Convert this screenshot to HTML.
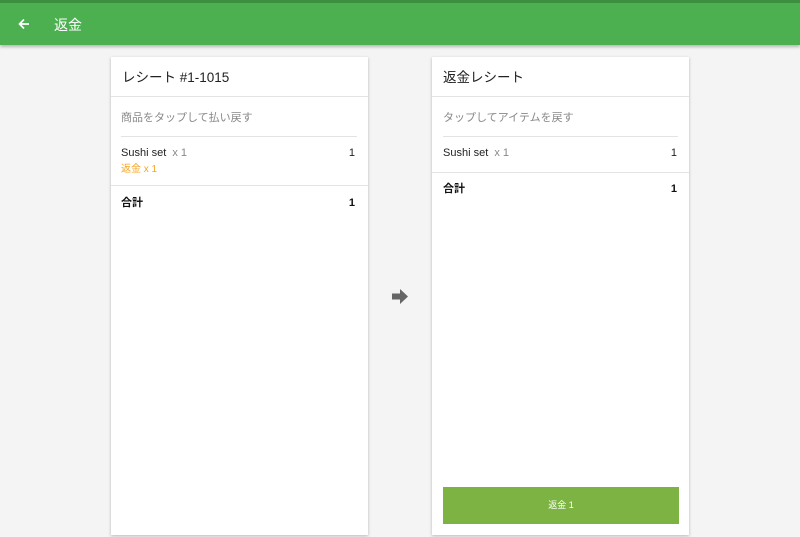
<!DOCTYPE html>
<html><head><meta charset="utf-8"><style>
*{margin:0;padding:0;box-sizing:border-box}
body{width:800px;height:537px;overflow:hidden;background:#f4f4f4;font-family:"Liberation Sans","Noto Sans CJK JP",sans-serif;position:relative}
.bar{position:absolute;left:0;top:0;width:800px;height:45px;background:#4caf50;border-top:3px solid #3c8f3f;box-shadow:0 2px 3px rgba(0,0,0,.25)}
.bar .t{position:absolute;left:54px;top:13px;line-height:18px;color:#fff;font-size:14px}
.bar svg{position:absolute;left:18px;top:15px}
.card{position:absolute;top:57px;width:257px;height:478px;background:#fff;box-shadow:0 1px 3px rgba(0,0,0,.25)}
.h{position:absolute;left:11px;top:12px;line-height:18px;font-size:13.5px;color:#222}
.abs{position:absolute;line-height:16px}
.line{position:absolute;height:1px;background:#e3e3e3}
.sm{font-size:11px;color:#222}
.g{color:#888}
.o{color:#f5a623;font-size:10px}
.b{font-weight:bold;font-size:11px;color:#111}
.btn{position:absolute;left:11px;top:430px;width:236px;height:37px;background:#7cb342;color:#fff;font-size:9px;text-align:center;line-height:37px}
</style></head><body>
<div class="bar"><svg width="12" height="12" viewBox="0 0 12 12"><path d="M11 6H2M6 1.5L1.5 6 6 10.5" stroke="#fff" stroke-width="1.7" fill="none"/></svg><div class="t">返金</div></div>

<div class="card" style="left:111px">
<div class="h">レシート #1-1015</div>
<div class="line" style="left:0;right:0;top:39px"></div>
<div class="abs sm g" style="left:10px;top:53px">商品をタップして払い戻す</div>
<div class="line" style="left:10px;right:11px;top:79px"></div>
<div class="abs sm" style="left:10px;top:88px">Sushi set&nbsp;&nbsp;<span class="g">x 1</span></div>
<div class="abs sm" style="right:13px;top:88px">1</div>
<div class="abs o" style="left:10px;top:105px">返金 x 1</div>
<div class="line" style="left:0;right:0;top:128px"></div>
<div class="abs b" style="left:10px;top:138px">合計</div>
<div class="abs b" style="right:13px;top:138px">1</div>
</div>

<svg class="abs" style="left:392px;top:289px" width="16" height="15" viewBox="0 0 16 15"><path d="M0 4.5H8V0L16 7.5 8 15V10.5H0Z" fill="#666"/></svg>

<div class="card" style="left:432px">
<div class="h">返金レシート</div>
<div class="line" style="left:0;right:0;top:39px"></div>
<div class="abs sm g" style="left:11px;top:53px">タップしてアイテムを戻す</div>
<div class="line" style="left:11px;right:11px;top:79px"></div>
<div class="abs sm" style="left:11px;top:88px">Sushi set&nbsp;&nbsp;<span class="g">x 1</span></div>
<div class="abs sm" style="right:12px;top:88px">1</div>
<div class="line" style="left:0;right:0;top:115px"></div>
<div class="abs b" style="left:11px;top:124px">合計</div>
<div class="abs b" style="right:12px;top:124px">1</div>
<div class="btn">返金 1</div>
</div>
</body></html>
